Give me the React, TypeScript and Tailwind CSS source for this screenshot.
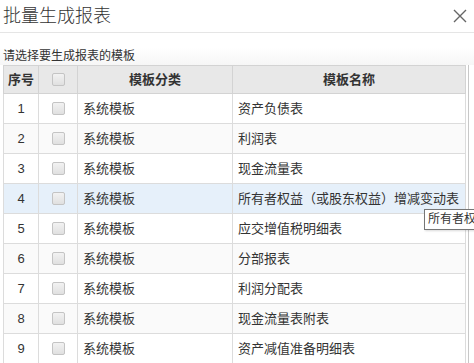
import React from 'react';

const rows = [
  '资产负债表',
  '利润表',
  '现金流量表',
  '所有者权益（或股东权益）增减变动表',
  '应交增值税明细表',
  '分部报表',
  '利润分配表',
  '现金流量表附表',
  '资产减值准备明细表',
];

function Checkbox() {
  return (
    <span className="inline-block w-[13px] h-[13px] rounded-[2px] border border-[#c4c4c4] bg-gradient-to-b from-[#f2f2f2] to-[#e0e0e0]" />
  );
}

export default function App() {
  return (
    <div
      className="relative w-[474px] h-[363px] overflow-hidden bg-white text-[#333]"
      style={{ fontFamily: '"Liberation Sans", "Noto Sans CJK SC", sans-serif' }}
    >
      <div className="flex items-center justify-between h-[33px] pl-[3px] pr-[6px] border-b border-[#e5e5e5]">
        <h1 className="text-[18px] leading-none font-light text-[#333]">批量生成报表</h1>
        <svg width="14" height="14" viewBox="0 0 14 14" className="mr-[1px]">
          <path d="M1 1 L13 13 M13 1 L1 13" stroke="#666" strokeWidth="1.4" />
        </svg>
      </div>

      <div className="h-[14px]" />
      <div className="pl-[3px] h-[18px] text-[12px] leading-[18px] bg-gradient-to-b from-white to-[#f6f6f6]">
        请选择要生成报表的模板
      </div>

      <div className="flex">
        <table className="ml-[3px] w-[463px] border-collapse text-[13px] table-fixed">
          <colgroup>
            <col className="w-[35px]" />
            <col className="w-[39px]" />
            <col className="w-[155px]" />
            <col />
          </colgroup>
          <thead>
            <tr className="h-[28px] bg-[#e8e8e8]">
              <th className="border border-[#d3d3d3] font-bold">序号</th>
              <th className="border border-[#d3d3d3]">
                <div className="flex justify-center"><Checkbox /></div>
              </th>
              <th className="border border-[#d3d3d3] font-bold">模板分类</th>
              <th className="border border-[#d3d3d3] font-bold">模板名称</th>
            </tr>
          </thead>
          <tbody>
            {rows.map((name, i) => (
              <tr
                key={name}
                className={`h-[30px] ${i === 3 ? 'bg-[#e6f0fa]' : i % 2 === 1 ? 'bg-[#fafafa]' : 'bg-white'}`}
              >
                <td className="border border-[#dcdcdc] text-center">{i + 1}</td>
                <td className="border border-[#dcdcdc]">
                  <div className="flex justify-center"><Checkbox /></div>
                </td>
                <td className="border border-[#dcdcdc] pl-[5px]">系统模板</td>
                <td className="border border-[#dcdcdc] pl-[5px] whitespace-nowrap">{name}</td>
              </tr>
            ))}
          </tbody>
        </table>
        <div className="ml-[2px] w-px bg-[#c8c8c8]" />
      </div>

      <div className="absolute left-[424px] top-[209px] border border-[#767676] bg-white px-[3px] h-[21px] leading-[19px] text-[12px] whitespace-nowrap shadow-[1px_1px_2px_rgba(0,0,0,0.15)]">
        所有者权益（或股东权益）增减变动表
      </div>
    </div>
  );
}
